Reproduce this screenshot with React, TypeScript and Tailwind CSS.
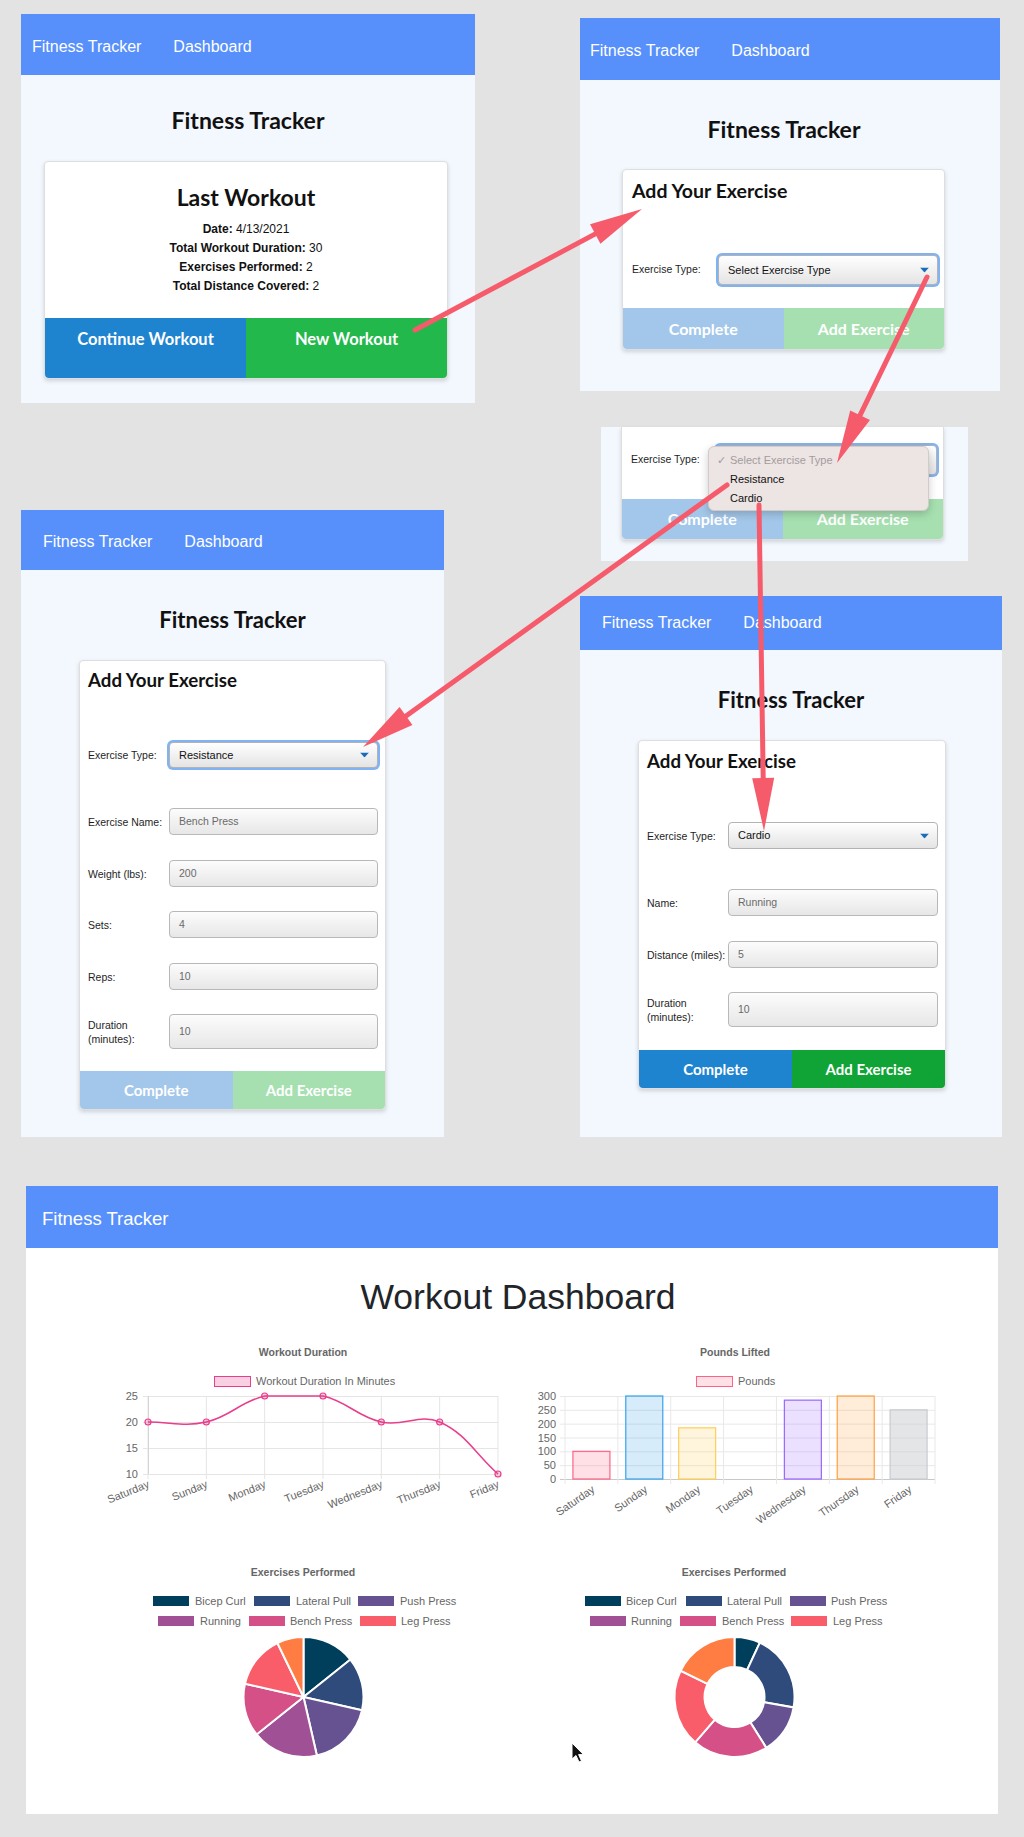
import React from "react";

type Pt = [number, number];

const PALETTE = ["#003f5c", "#2f4b7c", "#665191", "#a05195", "#d45087", "#f95d6a", "#ff7c43"];
const DAYS = ["Saturday", "Sunday", "Monday", "Tuesday", "Wednesday", "Thursday", "Friday"];
const LEGEND = ["Bicep Curl", "Lateral Pull", "Push Press", "Running", "Bench Press", "Leg Press"];
const CHART_FONT = "Liberation Sans, Arial, sans-serif";

function Nav({ cls, dash = true }: { cls: string; dash?: boolean }) {
  return (
    <div
      className={`flex shrink-0 items-center gap-[32px] bg-[#5790fb] text-white font-['Liberation_Sans',Arial,sans-serif] ${cls}`}
    >
      <span>Fitness Tracker</span>
      {dash ? <span>Dashboard</span> : null}
    </div>
  );
}

function Ring({ children, cls }: { children: React.ReactNode; cls: string }) {
  return <div className={`rounded-[6px] bg-[#80b3f4] p-[2px] ${cls}`}>{children}</div>;
}

function SelectBox({ value, cls }: { value: string; cls: string }) {
  return (
    <div
      className={`relative flex items-center rounded-[4px] border border-[#b3b3b3] bg-linear-to-b from-[#ffffff] to-[#e4e4e4] pl-[9px] text-[11px] text-[#111] ${cls}`}
    >
      {value}
      <svg className="absolute right-[8px] top-1/2 -translate-y-1/2" width="9" height="5" viewBox="0 0 9 5">
        <path d="M0 0h9L4.5 5z" fill="#1a6cb9" />
      </svg>
    </div>
  );
}

function Field({ value, cls }: { value: string; cls: string }) {
  return (
    <div
      className={`flex items-center rounded-[4px] border border-[#b8b8b8] bg-linear-to-b from-[#fcfcfc] to-[#e7e7e7] pl-[9px] text-[10.5px] text-[#6a6a6a] ${cls}`}
    >
      {value}
    </div>
  );
}

function Row({ label, children, cls }: { label: React.ReactNode; children: React.ReactNode; cls: string }) {
  return (
    <div className={`flex items-center pl-[8px] ${cls}`}>
      <div className="w-[81px] shrink-0 text-[10.5px] leading-[14px] text-[#1e1e1e]">{label}</div>
      {children}
    </div>
  );
}

function Buttons({ left, right, cls }: { left: string; right: string; cls: string }) {
  return (
    <div className={`mt-auto flex overflow-hidden rounded-b-[4px] font-['Lato',sans-serif] font-bold text-white ${cls}`}>
      <div className={`flex flex-1 items-center justify-center ${left}`}>Complete</div>
      <div className={`flex flex-1 items-center justify-center ${right}`}>Add Exercise</div>
    </div>
  );
}

function splinePath(pts: Pt[], top: number, bottom: number, t = 0.4) {
  const clamp = (v: number) => Math.min(bottom, Math.max(top, v));
  const cps = pts.map((p, i) => {
    const p0 = pts[i - 1] ?? p;
    const p2 = pts[i + 1] ?? p;
    const d01 = Math.hypot(p[0] - p0[0], p[1] - p0[1]);
    const d12 = Math.hypot(p2[0] - p[0], p2[1] - p[1]);
    const s = d01 + d12 || 1;
    const fa = (t * d01) / s;
    const fb = (t * d12) / s;
    return {
      prev: [p[0] - fa * (p2[0] - p0[0]), clamp(p[1] - fa * (p2[1] - p0[1]))],
      next: [p[0] + fb * (p2[0] - p0[0]), clamp(p[1] + fb * (p2[1] - p0[1]))],
    };
  });
  let d = `M${pts[0][0]},${pts[0][1]}`;
  for (let i = 1; i < pts.length; i++) {
    d += ` C${cps[i - 1].next[0]},${cps[i - 1].next[1]} ${cps[i].prev[0]},${cps[i].prev[1]} ${pts[i][0]},${pts[i][1]}`;
  }
  return d;
}

function LineChart() {
  const xs = DAYS.map((_, i) => 52 + i * 58.33);
  const vals = [20, 20, 25, 25, 20, 20, 10];
  const y = (v: number) => 139 - (v - 10) * 5.2;
  const pts: Pt[] = xs.map((x, i) => [x, y(vals[i])]);
  return (
    <svg width="416" height="190" viewBox="0 0 416 190" fontFamily={CHART_FONT}>
      <text x="207" y="21" textAnchor="middle" fontWeight="bold" fontSize="10.5" fill="#666">
        Workout Duration
      </text>
      <rect x="118.5" y="41.5" width="36" height="10" fill="rgba(232,62,140,0.25)" stroke="#e83e8c" />
      <text x="160" y="50" fontSize="11" fill="#666">
        Workout Duration In Minutes
      </text>
      {[25, 20, 15, 10].map((v) => (
        <g key={v}>
          <line x1="47" x2="402" y1={y(v) + 0.5} y2={y(v) + 0.5} stroke="#e5e5e5" />
          <text x="42" y={y(v) + 4} textAnchor="end" fontSize="11" fill="#666">
            {v}
          </text>
        </g>
      ))}
      {xs.map((x, i) => (
        <g key={i}>
          <line x1={x} x2={x} y1="61" y2="144" stroke="#e5e5e5" />
          <text x={x + 2} y="152" textAnchor="end" fontSize="11" fill="#666" transform={`rotate(-22 ${x + 2} 152)`}>
            {DAYS[i]}
          </text>
        </g>
      ))}
      <line x1="52.5" x2="52.5" y1="61" y2="139" stroke="#d5d5d5" />
      <path d={splinePath(pts, 61, 139)} fill="none" stroke="#e83e8c" strokeWidth="1.5" />
      {pts.map((p, i) => (
        <circle key={i} cx={p[0]} cy={p[1]} r="3" fill="rgba(232,62,140,0.25)" stroke="#e83e8c" strokeWidth="1.2" />
      ))}
    </svg>
  );
}

function BarChart() {
  const vals = [100, 300, 185, 0, 285, 300, 250];
  const fills = [
    ["rgba(255,99,132,0.2)", "rgb(255,99,132)"],
    ["rgba(54,162,235,0.2)", "rgb(54,162,235)"],
    ["rgba(255,206,86,0.2)", "rgb(255,206,86)"],
    ["rgba(75,192,192,0.2)", "rgb(75,192,192)"],
    ["rgba(153,102,255,0.2)", "rgb(153,102,255)"],
    ["rgba(255,159,64,0.2)", "rgb(255,159,64)"],
    ["rgba(201,203,207,0.5)", "rgb(201,203,207)"],
  ];
  const cw = 52.86;
  const y = (v: number) => 144 - (v * 83) / 300;
  return (
    <svg width="416" height="190" viewBox="0 0 416 190" fontFamily={CHART_FONT}>
      <text x="208" y="21" textAnchor="middle" fontWeight="bold" fontSize="10.5" fill="#666">
        Pounds Lifted
      </text>
      <rect x="169.5" y="41.5" width="36" height="10" fill="rgba(255,99,132,0.2)" stroke="rgb(255,99,132)" />
      <text x="211" y="50" fontSize="11" fill="#666">
        Pounds
      </text>
      {[300, 250, 200, 150, 100, 50, 0].map((v) => (
        <g key={v}>
          <line x1="33" x2="408" y1={y(v) + 0.5} y2={y(v) + 0.5} stroke={v === 0 ? "#c8c8c8" : "#e8e8e8"} />
          <text x="29" y={y(v) + 4} textAnchor="end" fontSize="11" fill="#666">
            {v}
          </text>
        </g>
      ))}
      {Array.from({ length: 8 }, (_, i) => 38 + i * cw).map((x, i) => (
        <line key={i} x1={x} x2={x} y1="61" y2="149" stroke="#e8e8e8" />
      ))}
      {vals.map((v, i) => {
        const cx = 38 + i * cw + cw / 2;
        return (
          <g key={i}>
            {v > 0 ? (
              <rect x={cx - 18.5} y={y(v)} width="37" height={144 - y(v)} fill={fills[i][0]} stroke={fills[i][1]} strokeWidth="1.2" />
            ) : null}
            <text x={cx + 4} y="156" textAnchor="end" fontSize="11" fill="#666" transform={`rotate(-35 ${cx + 4} 156)`}>
              {DAYS[i]}
            </text>
          </g>
        );
      })}
    </svg>
  );
}

function slice(cx: number, cy: number, r: number, r0: number, a0: number, a1: number) {
  const p = (a: number, rr: number) => {
    const rad = ((a - 90) * Math.PI) / 180;
    return `${cx + rr * Math.cos(rad)},${cy + rr * Math.sin(rad)}`;
  };
  const large = a1 - a0 > 180 ? 1 : 0;
  if (r0 === 0) return `M${cx},${cy} L${p(a0, r)} A${r},${r} 0 ${large} 1 ${p(a1, r)} Z`;
  return `M${p(a0, r)} A${r},${r} 0 ${large} 1 ${p(a1, r)} L${p(a1, r0)} A${r0},${r0} 0 ${large} 0 ${p(a0, r0)} Z`;
}

function PieLike({ angles, inner, legend }: { angles: number[]; inner: number; legend: { box: number; text: number }[] }) {
  let acc = 0;
  const arcs = angles.map((a, i) => {
    const a0 = acc;
    acc += a;
    return { a0, a1: acc, color: PALETTE[i] };
  });
  return (
    <svg width="416" height="215" viewBox="0 0 416 215" fontFamily={CHART_FONT}>
      <text x="207" y="21" textAnchor="middle" fontWeight="bold" fontSize="10.5" fill="#666">
        Exercises Performed
      </text>
      {LEGEND.map((name, i) => {
        const ly = i < 3 ? 46 : 66;
        return (
          <g key={name}>
            <rect x={legend[i].box} y={ly - 5} width="36" height="10" fill={PALETTE[i]} />
            <text x={legend[i].text} y={ly + 4} fontSize="11" fill="#666">
              {name}
            </text>
          </g>
        );
      })}
      {arcs
        .filter((s) => s.a1 - s.a0 > 0)
        .map((s, i) => (
          <path key={i} d={slice(207.5, 142, 60, inner, s.a0, s.a1)} fill={s.color} stroke="#fff" strokeWidth="2" />
        ))}
    </svg>
  );
}

function Arrow({ x1, y1, x2, y2 }: { x1: number; y1: number; x2: number; y2: number }) {
  const dx = x2 - x1;
  const dy = y2 - y1;
  const len = Math.hypot(dx, dy);
  const ux = dx / len;
  const uy = dy / len;
  const bx = x2 - ux * 53;
  const by = y2 - uy * 53;
  const px = -uy * 11;
  const py = ux * 11;
  return (
    <g>
      <line x1={x1} y1={y1} x2={bx + ux * 6} y2={by + uy * 6} stroke="#f65b6b" strokeWidth="5" strokeLinecap="round" />
      <polygon points={`${x2},${y2} ${bx + px},${by + py} ${bx - px},${by - py}`} fill="#f65b6b" />
    </g>
  );
}

export default function App() {
  return (
    <div className="relative h-[1837px] w-[1024px] overflow-hidden bg-[#e3e3e3] font-['Liberation_Sans',Arial,sans-serif]">
      {/* last workout */}
      <div className="absolute left-[21px] top-[14px] flex h-[389px] w-[454px] flex-col bg-[#f3f7fe]">
        <Nav cls="h-[61px] pl-[11px] pt-[4px] text-[16px]" />
        <h2 className="mt-[30px] text-center font-['Lato',sans-serif] text-[23px] font-bold leading-[30px] text-[#111]">
          Fitness Tracker
        </h2>
        <div className="ml-[23px] mt-[26px] flex h-[218px] w-[404px] flex-col rounded-[4px] border border-[#dedede] bg-white shadow-[0_2px_4px_rgba(0,0,0,0.15)]">
          <div className="mt-[19px] text-center font-['Lato',sans-serif] text-[23px] font-bold leading-[32px] text-[#111]">
            Last Workout
          </div>
          <div className="mt-[7px] text-center text-[12px] leading-[19px] text-[#111]">
            <div>
              <b>Date:</b> 4/13/2021
            </div>
            <div>
              <b>Total Workout Duration:</b> 30
            </div>
            <div>
              <b>Exercises Performed:</b> 2
            </div>
            <div>
              <b>Total Distance Covered:</b> 2
            </div>
          </div>
          <div className="mt-auto flex h-[60px] overflow-hidden rounded-b-[4px] font-['Lato',sans-serif] text-[16.5px] font-bold text-white">
            <div className="flex-1 bg-[#1f84d0] pt-[11px] text-center leading-[20px]">Continue Workout</div>
            <div className="flex-1 bg-[#22b84b] pt-[11px] text-center leading-[20px]">New Workout</div>
          </div>
        </div>
      </div>

      {/* add exercise, empty */}
      <div className="absolute left-[580px] top-[18px] flex h-[373px] w-[420px] flex-col bg-[#f3f7fe]">
        <Nav cls="h-[62px] pl-[10px] pt-[4px] text-[16px]" />
        <h2 className="mt-[34px] pr-[12px] text-center font-['Lato',sans-serif] text-[23px] font-bold leading-[30px] text-[#111]">
          Fitness Tracker
        </h2>
        <div className="ml-[42px] mt-[25px] flex h-[181px] w-[323px] flex-col rounded-[4px] border border-[#dedede] bg-white shadow-[0_2px_4px_rgba(0,0,0,0.15)]">
          <div className="mt-[8px] pl-[9px] font-['Lato',sans-serif] text-[19.5px] font-bold leading-[26px] text-[#111]">
            Add Your Exercise
          </div>
          <div className="mt-[49px] flex h-[34px] items-center pl-[9px]">
            <div className="w-[84px] shrink-0 text-[10.5px] text-[#1e1e1e]">Exercise Type:</div>
            <Ring cls="h-[34px] w-[224px]">
              <SelectBox value="Select Exercise Type" cls="h-[30px] w-full" />
            </Ring>
          </div>
          <Buttons left="bg-[#a3c7ea]" right="bg-[#a6e0b0]" cls="h-[41px] text-[16px]" />
        </div>
      </div>

      {/* dropdown open */}
      <div className="absolute left-[601px] top-[427px] h-[134px] w-[367px] bg-[#f3f7fe]">
        <div className="ml-[20px] flex h-[113px] w-[323px] flex-col rounded-b-[4px] border-x border-b border-[#dedede] bg-white shadow-[0_2px_4px_rgba(0,0,0,0.15)]">
          <div className="mt-[16px] flex h-[34px] items-center pl-[9px]">
            <div className="w-[83px] shrink-0 text-[10.5px] text-[#1e1e1e]">Exercise Type:</div>
            <Ring cls="h-[34px] w-[225px]">
              <SelectBox value="" cls="h-[30px] w-full" />
            </Ring>
          </div>
          <Buttons left="bg-[#a3c7ea]" right="bg-[#a6e0b0]" cls="h-[40px] text-[16px]" />
        </div>
        <div className="absolute left-[107px] top-[19px] h-[65px] w-[221px] rounded-[6px] border border-[#d3caca] bg-[#ede4e4] pt-[4px] text-[11px] leading-[19px] shadow-[0_3px_8px_rgba(0,0,0,0.2)]">
          <div className="flex text-[#a39c9c]">
            <span className="w-[21px] pl-[8px]">✓</span>
            <span>Select Exercise Type</span>
          </div>
          <div className="pl-[21px] text-[#111]">Resistance</div>
          <div className="pl-[21px] text-[#111]">Cardio</div>
        </div>
      </div>

      {/* resistance */}
      <div className="absolute left-[21px] top-[510px] flex h-[627px] w-[423px] flex-col bg-[#f3f7fe]">
        <Nav cls="h-[60px] pl-[22px] pt-[4px] text-[16px]" />
        <h2 className="mt-[35px] text-center font-['Lato',sans-serif] text-[22px] font-bold leading-[30px] text-[#111]">
          Fitness Tracker
        </h2>
        <div className="ml-[58px] mt-[25px] flex h-[450px] w-[307px] flex-col rounded-[4px] border border-[#dedede] bg-white shadow-[0_2px_4px_rgba(0,0,0,0.15)]">
          <div className="mt-[6px] pl-[8px] font-['Lato',sans-serif] text-[18.7px] font-bold leading-[26px] text-[#111]">
            Add Your Exercise
          </div>
          <Row label="Exercise Type:" cls="mt-[47px] h-[30px]">
            <Ring cls="-ml-[2px] h-[30px] w-[213px]">
              <SelectBox value="Resistance" cls="h-[26px] w-full" />
            </Ring>
          </Row>
          <Row label="Exercise Name:" cls="mt-[38px] h-[27px]">
            <Field value="Bench Press" cls="h-[27px] w-[209px]" />
          </Row>
          <Row label="Weight (lbs):" cls="mt-[25px] h-[27px]">
            <Field value="200" cls="h-[27px] w-[209px]" />
          </Row>
          <Row label="Sets:" cls="mt-[24px] h-[27px]">
            <Field value="4" cls="h-[27px] w-[209px]" />
          </Row>
          <Row label="Reps:" cls="mt-[25px] h-[27px]">
            <Field value="10" cls="h-[27px] w-[209px]" />
          </Row>
          <Row
            label={
              <>
                Duration
                <br />
                (minutes):
              </>
            }
            cls="mt-[24px] h-[35px]"
          >
            <Field value="10" cls="h-[35px] w-[209px]" />
          </Row>
          <Buttons left="bg-[#a3c7ea]" right="bg-[#a6e0b0]" cls="h-[38px] text-[15px]" />
        </div>
      </div>

      {/* cardio */}
      <div className="absolute left-[580px] top-[596px] flex h-[541px] w-[422px] flex-col bg-[#f3f7fe]">
        <Nav cls="h-[54px] pl-[22px] text-[16px]" />
        <h2 className="mt-[35px] text-center font-['Lato',sans-serif] text-[22px] font-bold leading-[30px] text-[#111]">
          Fitness Tracker
        </h2>
        <div className="ml-[58px] mt-[25px] flex h-[349px] w-[308px] flex-col rounded-[4px] border border-[#dedede] bg-white shadow-[0_2px_4px_rgba(0,0,0,0.15)]">
          <div className="mt-[7px] pl-[8px] font-['Lato',sans-serif] text-[18.7px] font-bold leading-[26px] text-[#111]">
            Add Your Exercise
          </div>
          <Row label="Exercise Type:" cls="mt-[48px] h-[27px]">
            <SelectBox value="Cardio" cls="h-[27px] w-[210px]" />
          </Row>
          <Row label="Name:" cls="mt-[40px] h-[27px]">
            <Field value="Running" cls="h-[27px] w-[210px]" />
          </Row>
          <Row label="Distance (miles):" cls="mt-[25px] h-[27px]">
            <Field value="5" cls="h-[27px] w-[210px]" />
          </Row>
          <Row
            label={
              <>
                Duration
                <br />
                (minutes):
              </>
            }
            cls="mt-[24px] h-[35px]"
          >
            <Field value="10" cls="h-[35px] w-[210px]" />
          </Row>
          <Buttons left="bg-[#1f84d0]" right="bg-[#10a335]" cls="h-[38px] text-[15px]" />
        </div>
      </div>

      {/* dashboard */}
      <div className="absolute left-[26px] top-[1186px] flex h-[628px] w-[972px] flex-col bg-white">
        <Nav cls="h-[62px] pl-[16px] pt-[4px] text-[18.5px]" dash={false} />
        <h1 className="mt-[22px] h-[54px] pl-[12px] text-center text-[35.5px] leading-[54px] text-[#212529]">
          Workout Dashboard
        </h1>
        <div className="mt-[11px] flex gap-[15px] pl-[70px]">
          <LineChart />
          <BarChart />
        </div>
        <div className="mt-[30px] flex gap-[15px] pl-[70px]">
          <PieLike
            angles={[51.4, 51.4, 64.3, 64.3, 51.4, 51.4, 25.8]}
            inner={0}
            legend={[
              { box: 57, text: 99 },
              { box: 158, text: 200 },
              { box: 262, text: 304 },
              { box: 62, text: 104 },
              { box: 153, text: 194 },
              { box: 264, text: 305 },
            ]}
          />
          <PieLike
            angles={[25, 75, 48, 0, 73, 75, 64]}
            inner={30}
            legend={[
              { box: 58, text: 99 },
              { box: 159, text: 200 },
              { box: 263, text: 304 },
              { box: 63, text: 104 },
              { box: 153, text: 195 },
              { box: 264, text: 306 },
            ]}
          />
        </div>
      </div>

      {/* annotation arrows and cursor */}
      <svg className="pointer-events-none absolute left-0 top-0" width="1024" height="1837" viewBox="0 0 1024 1837">
        <Arrow x1={415} y1={330} x2={642} y2={209} />
        <Arrow x1={927} y1={277} x2={837} y2={463} />
        <Arrow x1={727} y1={485} x2={363} y2={747} />
        <Arrow x1={759} y1={505} x2={764} y2={831} />
        <path
          d="M572 1743 L572 1759 L576 1755.5 L579 1762 L581.5 1761 L578.6 1754.6 L583.5 1754.6 Z"
          fill="#111"
          stroke="#fff"
          strokeWidth="1"
          strokeLinejoin="round"
        />
      </svg>
    </div>
  );
}
